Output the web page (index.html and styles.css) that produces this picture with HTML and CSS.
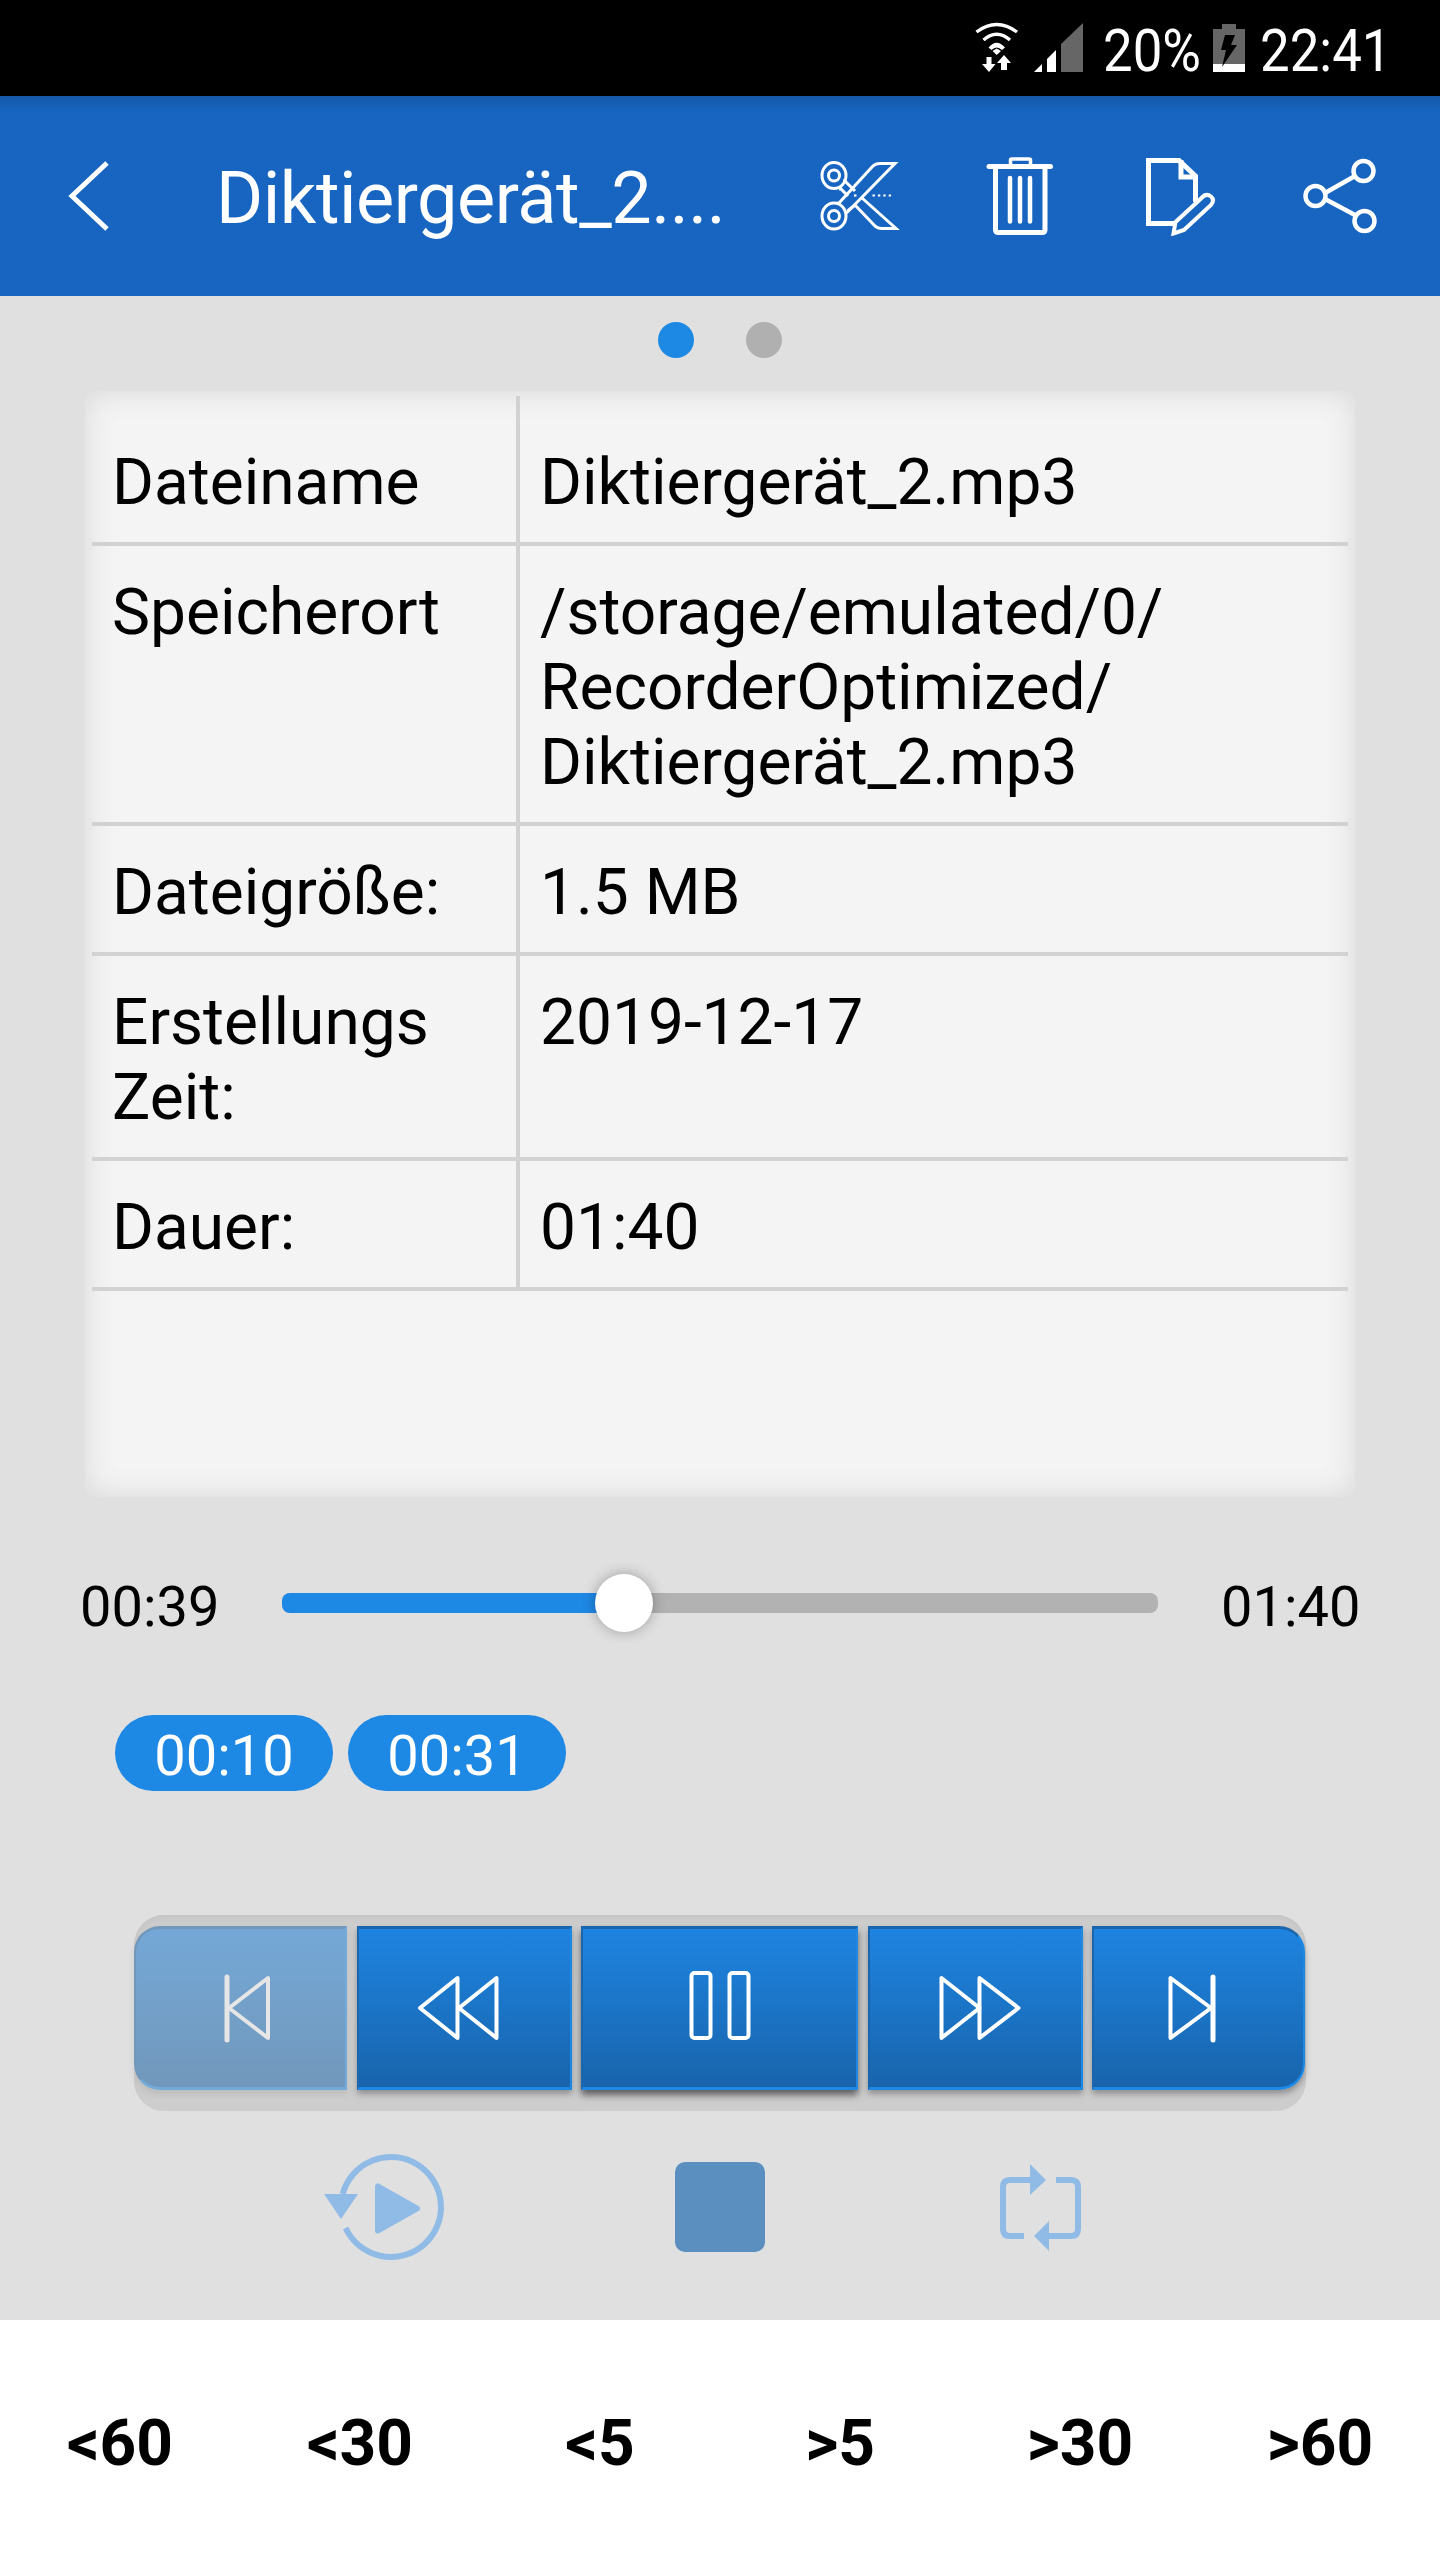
FILE: index.html
```html
<!DOCTYPE html>
<html lang="de">
<head>
<meta charset="utf-8">
<title>Diktiergerät</title>
<link rel="stylesheet" href="styles.css">
</head>
<body>
<div class="screen">
  <header class="status">
    <svg class="st-wifi" width="52" height="56" viewBox="0 0 52 56">
      <g fill="none" stroke="#fff" stroke-width="3.4">
        <path d="M6.5 12 Q26.7 -3 47 12"/>
        <path d="M13.5 20 Q26.7 8.500 40 20"/>
      </g>
      <path d="M18.500 27.500 Q26.7 18 35 27.500 L32 30 Q26.700 25 21.500 30Z" fill="#fff"/>
      <path d="M22.500 31 L26.700 28.500 L31 31 L26.700 35Z" fill="#fff"/>
      <path d="M16.500 37 H21.500 V44 H25.500 L19 52 L12 44 H16.500Z" fill="#fff"/>
      <path d="M34 35 L41 43 H37 V50 H31 V43 H27Z" fill="#fff"/>
    </svg>
    <svg class="st-signal" width="49" height="49" viewBox="0 0 49 49">
      <path d="M0 49 L8 41 V49Z" fill="#fff"/>
      <path d="M13 36 L22 27 V49 H13Z" fill="#fff"/>
      <path d="M27 21 L49 0 V49 H27Z" fill="#666"/>
    </svg>
    <span class="st-text st-pct">20%</span>
    <svg class="st-batt" width="32" height="48" viewBox="0 0 32 48">
      <path d="M9 0 H23 V5 H32 V40 H0 V5 H9Z" fill="#666"/>
      <rect y="40" width="32" height="8" fill="#fff"/>
      <path d="M12 11 H22 L18 21 H24 L9 43 L13 26 H8Z" fill="#000"/>
    </svg>
    <span class="st-text st-time">22:41</span>
  </header>

  <nav class="appbar">
    <div class="back">
      <svg width="50" height="80" viewBox="0 0 50 80"><path d="M44 7 L9 40 L44 73" fill="none" stroke="#fff" stroke-width="5"/></svg>
    </div>
    <h1 class="title">Diktiergerät_2....</h1>
    <div class="actions">
      <div class="action">
        <svg width="80" height="80" viewBox="0 0 80 80" fill="none" stroke="#fff" stroke-width="3">
          <ellipse cx="14" cy="19.500" rx="12" ry="13"/>
          <ellipse cx="14" cy="19.500" rx="5.500" ry="5.500"/>
          <ellipse cx="14" cy="60" rx="12" ry="13"/>
          <ellipse cx="14" cy="60" rx="5.500" ry="5.500"/>
          <path d="M17 47 L19 47 L52 11 Q55 7.500 60 7.500 H75 L27.500 56 L25 58"/>
          <path d="M24 23 L26 26 L35 35"/>
          <path d="M19 33 L21 33 L28 40"/>
          <path d="M42 42 L76 72.500 H62 Q57 72.500 54 69 L35 49"/>
          <path d="M27.500 55 L35 49"/>
          <path d="M52.500 39.500 H72" stroke-width="2.200" stroke-dasharray="2.400 3"/>
          <path d="M34 39.500 H36.500" stroke-width="2.200"/>
        </svg>
      </div>
      <div class="action">
        <svg width="80" height="80" viewBox="0 0 80 80" fill="none" stroke="#fff">
          <path d="M9 10.500 H70.500" stroke-width="5" stroke-linecap="round"/>
          <path d="M30.500 8 V4 Q30.500 3 32 3 H49 Q50.500 3 50.500 4 V8" stroke-width="3.500"/>
          <path d="M15.500 12 V73.500 Q15.500 76.500 18.500 76.500 H62 Q65 76.500 65 73.500 V12" stroke-width="5"/>
          <path d="M30 22 V65.500 M40 22 V65.500 M50 22 V65.500" stroke-width="4.500" stroke-linecap="round"/>
        </svg>
      </div>
      <div class="action">
        <svg width="80" height="80" viewBox="0 0 80 80" fill="none" stroke="#fff" stroke-width="5">
          <path d="M35 67.500 H8.500 V4.500 H39 L55.500 20 V46"/>
          <path d="M41 4 V21 H55.500"/>
          <path d="M35.500 66 L61 42.500 Q66 36.500 71 40.500 Q75 44 71 49 L44 74 L33.500 77.500Z" stroke-width="4"/>
        </svg>
      </div>
      <div class="action">
        <svg width="80" height="80" viewBox="0 0 80 80" fill="none" stroke="#fff" stroke-width="4.500">
          <circle cx="63.500" cy="15" r="10"/>
          <circle cx="15.500" cy="40" r="10"/>
          <circle cx="64.500" cy="65" r="10"/>
          <path d="M25 37 L55 20 M25 43 L55 59"/>
        </svg>
      </div>
    </div>
  </nav>

  <div class="pager">
    <span class="dot dot-on"></span>
    <span class="dot"></span>
  </div>

  <section class="card">
    <div class="row row-first">
      <div class="cell cell-key">Dateiname</div>
      <div class="cell">Diktiergerät_2.mp3</div>
    </div>
    <div class="row">
      <div class="cell cell-key">Speicherort</div>
      <div class="cell">/storage/emulated/0/<br>RecorderOptimized/<br>Diktiergerät_2.mp3</div>
    </div>
    <div class="row">
      <div class="cell cell-key">Dateigröße:</div>
      <div class="cell">1.5 MB</div>
    </div>
    <div class="row">
      <div class="cell cell-key">Erstellungs<br>Zeit:</div>
      <div class="cell">2019-12-17</div>
    </div>
    <div class="row">
      <div class="cell cell-key">Dauer:</div>
      <div class="cell">01:40</div>
    </div>
  </section>

  <div class="seek">
    <span class="time">00:39</span>
    <div class="track">
      <div class="fill" style="width:39%"><span class="knob"></span></div>
    </div>
    <span class="time time-end">01:40</span>
  </div>

  <div class="chips">
    <span class="chip">00:10</span>
    <span class="chip">00:31</span>
  </div>

  <div class="transport">
    <button class="tbtn tbtn-first tbtn-off">
      <svg width="100" height="80" viewBox="0 0 100 80" fill="none" stroke="#fff" stroke-width="4" stroke-linejoin="round">
        <path d="M36 9 V72" stroke-width="5" stroke-linecap="round"/>
        <path d="M38 40 L77 10 V70Z"/>
      </svg>
    </button>
    <button class="tbtn">
      <svg width="100" height="80" viewBox="0 0 100 80" fill="none" stroke="#fff" stroke-width="4" stroke-linejoin="round">
        <path d="M6 40 L43.500 10 V70Z"/>
        <path d="M45 40 L82.500 10 V70 L45 40"/>
      </svg>
    </button>
    <button class="tbtn tbtn-main">
      <svg width="100" height="80" viewBox="0 0 100 80" fill="none" stroke="#fff" stroke-width="4">
        <rect x="21.500" y="5" width="19" height="65" rx="3"/>
        <rect x="59.500" y="5" width="19" height="65" rx="3"/>
      </svg>
    </button>
    <button class="tbtn">
      <svg width="100" height="80" viewBox="0 0 100 80" fill="none" stroke="#fff" stroke-width="4" stroke-linejoin="round">
        <path d="M16.500 10 V70 L54.500 40Z"/>
        <path d="M54.500 10 V70 L93.500 40Z"/>
      </svg>
    </button>
    <button class="tbtn tbtn-last">
      <svg width="100" height="80" viewBox="0 0 100 80" fill="none" stroke="#fff" stroke-width="4" stroke-linejoin="round">
        <path d="M21.500 10 V70 L62 40Z"/>
        <path d="M64 9 V72" stroke-width="5" stroke-linecap="round"/>
      </svg>
    </button>
  </div>

  <div class="modes">
    <svg class="mode-replay" width="130" height="120" viewBox="0 0 130 120">
      <path d="M21.700 47 A50 50 0 1 1 24.600 81" fill="none" stroke="#8fbbe6" stroke-width="6"/>
      <path d="M3 47 H37 L20 72Z" fill="#8fbbe6"/>
      <path d="M57 39.500 V83.500 L96 61.500Z" fill="#8fbbe6" stroke="#8fbbe6" stroke-width="6" stroke-linejoin="round"/>
    </svg>
    <div class="mode-stop"></div>
    <svg class="mode-loop" width="90" height="90" viewBox="0 0 90 90">
      <path d="M34 18 H14 Q7 18 7 25 V67 Q7 74 14 74 H28" fill="none" stroke="#8fbbe6" stroke-width="6"/>
      <path d="M60 18 H75 Q82 18 82 25 V67 Q82 74 75 74 H53" fill="none" stroke="#8fbbe6" stroke-width="6"/>
      <path d="M34 2 L50 18 L34 33Z" fill="#8fbbe6"/>
      <path d="M53 59 L38 74 L53 89Z" fill="#8fbbe6"/>
    </svg>
  </div>

  <footer class="jumps">
    <span class="jump">&lt;60</span>
    <span class="jump">&lt;30</span>
    <span class="jump">&lt;5</span>
    <span class="jump">&gt;5</span>
    <span class="jump">&gt;30</span>
    <span class="jump">&gt;60</span>
  </footer>
</div>
</body>
</html>
```

FILE: styles.css
```css
* { box-sizing: border-box; }
html, body { margin: 0; padding: 0; }
body { font-family: Roboto, "Noto Sans", sans-serif; color: #000; }

.screen {
  width: 1440px;
  height: 2560px;
  background: #e0e0e0;
  display: flex;
  flex-direction: column;
  overflow: hidden;
}

/* status bar */
.status {
  height: 96px;
  flex: none;
  background: #000;
  display: flex;
  align-items: flex-start;
  padding-left: 970px;
  color: #fff;
}
.st-wifi { margin-top: 20px; flex: none; }
.st-signal { margin: 23px 0 0 12px; flex: none; }
.st-text {
  font-size: 60px;
  font-weight: 400;
  line-height: 70px;
  margin-top: 16px;
  transform: scaleX(.88);
  transform-origin: 0 50%;
  white-space: nowrap;
  flex: none;
}
.st-pct { margin-left: 20px; width: 110px; }
.st-batt { margin-top: 24px; flex: none; }
.st-time { margin-left: 15px; width: 150px; }

/* app bar */
.appbar {
  height: 200px;
  flex: none;
  background: linear-gradient(#1459a7, #1765c1 8%);
  display: flex;
  align-items: center;
  color: #fff;
}
.back { width: 64px; margin-left: 63px; flex: none; display: flex; }
.title {
  margin: 6px 0 0 89px;
  width: 564px;
  flex: none;
  font-size: 72px;
  font-weight: 400;
  line-height: 84px;
  letter-spacing: -.45px;
  white-space: nowrap;
  overflow: hidden;
}
.actions { display: flex; flex: none; }
.action {
  width: 160px;
  height: 200px;
  display: flex;
  align-items: center;
  justify-content: center;
}

/* pager */
.pager {
  flex: none;
  height: 95px;
  padding-top: 26px;
  display: flex;
  justify-content: center;
  gap: 52px;
}
.dot { width: 36px; height: 36px; border-radius: 50%; background: #b0b0b0; }
.dot-on { background: #1e88e5; }

/* info card */
.card {
  flex: none;
  width: 1270px;
  height: 1106px;
  margin-left: 85px;
  padding: 5px 7px 0;
  border-radius: 12px;
  background: #f4f4f4;
  box-shadow: inset 0 0 30px #d8d8d8;
  font-size: 64px;
  line-height: 75px;
}
.row { display: flex; border-bottom: 4px solid #d2d2d2; }
.cell { padding: 29px 0 22px 20px; flex: 1; }
.cell-key { flex: none; width: 428px; padding-left: 20px; border-right: 4px solid #d2d2d2; }
.row-first .cell { padding-top: 49px; }

/* seek bar */
.seek {
  flex: none;
  margin-top: 77px;
  padding-left: 80px;
  height: 66px;
  display: flex;
  align-items: center;
}
.time { font-size: 56px; line-height: 66px; width: 202px; flex: none; }
.time-end { margin-left: 63px; width: auto; }
.track {
  width: 876px;
  height: 20px;
  flex: none;
  margin-bottom: 8px;
  border-radius: 8px;
  background: #b2b2b2;
}
.fill {
  position: relative;
  height: 100%;
  border-radius: 8px 0 0 8px;
  background: #1e88e5;
}
.knob {
  position: absolute;
  right: -29px;
  top: -19px;
  width: 58px;
  height: 58px;
  border-radius: 50%;
  background: #fff;
  box-shadow: 0 0 14px rgba(0, 0, 0, .3);
}

/* chips */
.chips {
  flex: none;
  margin-top: 75px;
  padding-left: 115px;
  display: flex;
  gap: 15px;
}
.chip {
  width: 218px;
  height: 76px;
  padding-top: 8px;
  border-radius: 38px;
  background: #1e88e5;
  color: #fff;
  font-size: 56px;
  line-height: 66px;
  text-align: center;
}

/* transport */
.transport {
  flex: none;
  width: 1172px;
  height: 196px;
  margin: 124px 0 0 134px;
  padding-top: 11px;
  display: flex;
  gap: 9.5px;
  border-radius: 30px;
  background: #cdcdcd;
  box-shadow: inset 0 5px 5px -2px #c4c4c4;
}
.tbtn {
  width: 215px;
  height: 164px;
  flex: none;
  padding: 0;
  display: flex;
  align-items: center;
  justify-content: center;
  border-style: solid;
  border-width: 3px 2px;
  border-color: #1a66ae #1e88e5 #1e88e5 #1a66ae;
  background: linear-gradient(#1e84e0, #1864ac);
  box-shadow: 0 4px 6px rgba(0, 0, 0, .3);
}
.tbtn svg { flex: none; display: block; }
.tbtn-first { width: 213px; border-radius: 26px 0 0 26px; }
.tbtn-last { width: 213px; border-radius: 0 26px 26px 0; }
.tbtn-main { width: 277px; box-shadow: 0 5px 7px rgba(0, 0, 0, .55); }
.tbtn-off { opacity: .5; box-shadow: 0 4px 6px rgba(0, 0, 0, .15); }

/* mode icons */
.modes {
  flex: none;
  margin-top: 36px;
  height: 120px;
  padding-left: 321px;
  display: flex;
  align-items: center;
}
.modes svg { flex: none; display: block; }
.mode-stop {
  width: 90px;
  height: 90px;
  flex: none;
  margin-left: 224px;
  border-radius: 10px;
  background: #5a8fbf;
}
.mode-loop { margin-left: 231px; }

/* jump row */
.jumps {
  flex: 1;
  margin-top: 53px;
  background: #fff;
  display: grid;
  grid-template-columns: repeat(6, 240px);
  align-content: start;
  padding-top: 86px;
}
.jump {
  text-align: center;
  font-size: 64px;
  font-weight: 700;
  line-height: 75px;
}
```
